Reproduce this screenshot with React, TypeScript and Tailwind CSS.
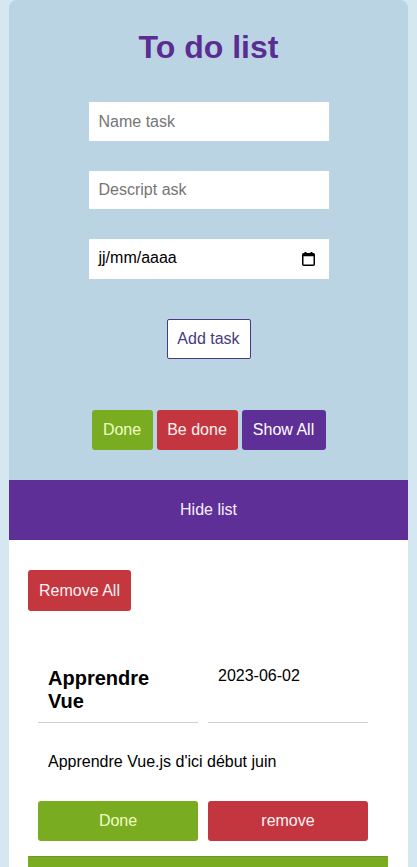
import React from "react";

function CalendarIcon() {
  return (
    <svg width="13" height="14" viewBox="0 0 13 14" className="block">
      <rect x="2.5" y="0" width="2" height="3" fill="#000" />
      <rect x="8.5" y="0" width="2" height="3" fill="#000" />
      <rect x="0.75" y="1.75" width="11.5" height="11.5" rx="1" fill="none" stroke="#000" strokeWidth="1.5" />
      <rect x="0.75" y="1.75" width="11.5" height="2.5" fill="#000" />
    </svg>
  );
}

export default function App() {
  return (
    <div
      className="min-h-[867px] bg-[#d5e7f0] pl-[9px]"
      style={{ fontFamily: '"Liberation Sans", Arial, sans-serif' }}
    >
      <div className="w-[399px] rounded-t-[8px] overflow-hidden">
        <div className="bg-[#bad4e3] flex flex-col items-center pt-[29px] pb-[30px]">
          <h1 className="text-[32px] leading-[37px] font-bold text-[#5b2d92]">To do list</h1>
          <input
            placeholder="Name task"
            className="mt-[36px] w-[240px] h-[39px] bg-white pl-[10px] text-[16px] text-black placeholder:text-[#757575] outline-none"
          />
          <input
            placeholder="Descript ask"
            className="mt-[30px] w-[240px] h-[38px] bg-white pl-[10px] text-[16px] text-black placeholder:text-[#757575] outline-none"
          />
          <div className="mt-[30px] w-[240px] h-[40px] bg-white pl-[10px] pr-[14px] flex items-center justify-between text-[16px] text-black">
            <span className="-mt-[2px]">jj/mm/aaaa</span>
            <CalendarIcon />
          </div>
          <button className="mt-[40px] w-[84px] h-[40px] bg-white border border-[#4b3a80] rounded-[2px] text-[16px] text-[#4a3b7c]">
            Add task
          </button>
          <div className="mt-[51px] flex gap-[4px]">
            <button className="w-[61px] h-[40px] bg-[#7aac21] rounded-[3px] text-[16px] text-[#efffc4]">Done</button>
            <button className="w-[81px] h-[40px] bg-[#c4363f] rounded-[3px] text-[16px] text-[#fff2f2]">Be done</button>
            <button className="w-[84px] h-[40px] bg-[#5e2f97] rounded-[3px] text-[16px] text-white">Show All</button>
          </div>
        </div>
        <div className="h-[60px] bg-[#5e2f97] flex items-center justify-center text-[16px] text-[#f8f0ff]">
          Hide list
        </div>
        <div className="bg-white pt-[30px] pl-[19px] min-h-[327px]">
          <button className="w-[103px] h-[41px] bg-[#c4373f] rounded-[3px] text-[16px] text-[#fff0f0]">Remove All</button>
          <div className="w-[360px]">
            <div className="mt-[56px] pl-[10px] flex gap-[10px]">
              <div className="w-[160px] pl-[10px] pr-[10px] pb-[9px] border-b border-[#cfcfcf]">
                <div className="text-[20px] leading-[23px] font-bold text-black">Apprendre Vue</div>
              </div>
              <div className="w-[160px] pl-[10px] pb-[9px] border-b border-[#cfcfcf]">
                <div className="text-[16px] leading-[18px] text-black">2023-06-02</div>
              </div>
            </div>
            <p className="mt-[30px] pl-[20px] text-[16px] leading-[18px] text-black">Apprendre Vue.js d'ici début juin</p>
            <div className="mt-[30px] pl-[10px] flex gap-[10px]">
              <button className="w-[160px] h-[40px] bg-[#7aac21] rounded-[3px] text-[16px] text-[#efffc4]">Done</button>
              <button className="w-[160px] h-[40px] bg-[#c4363f] rounded-[3px] text-[16px] text-[#fff2f2]">remove</button>
            </div>
            <div className="mt-[15px] h-[40px] bg-[#7aac21] border-t border-[#6f9a2a]" />
          </div>
        </div>
      </div>
    </div>
  );
}
